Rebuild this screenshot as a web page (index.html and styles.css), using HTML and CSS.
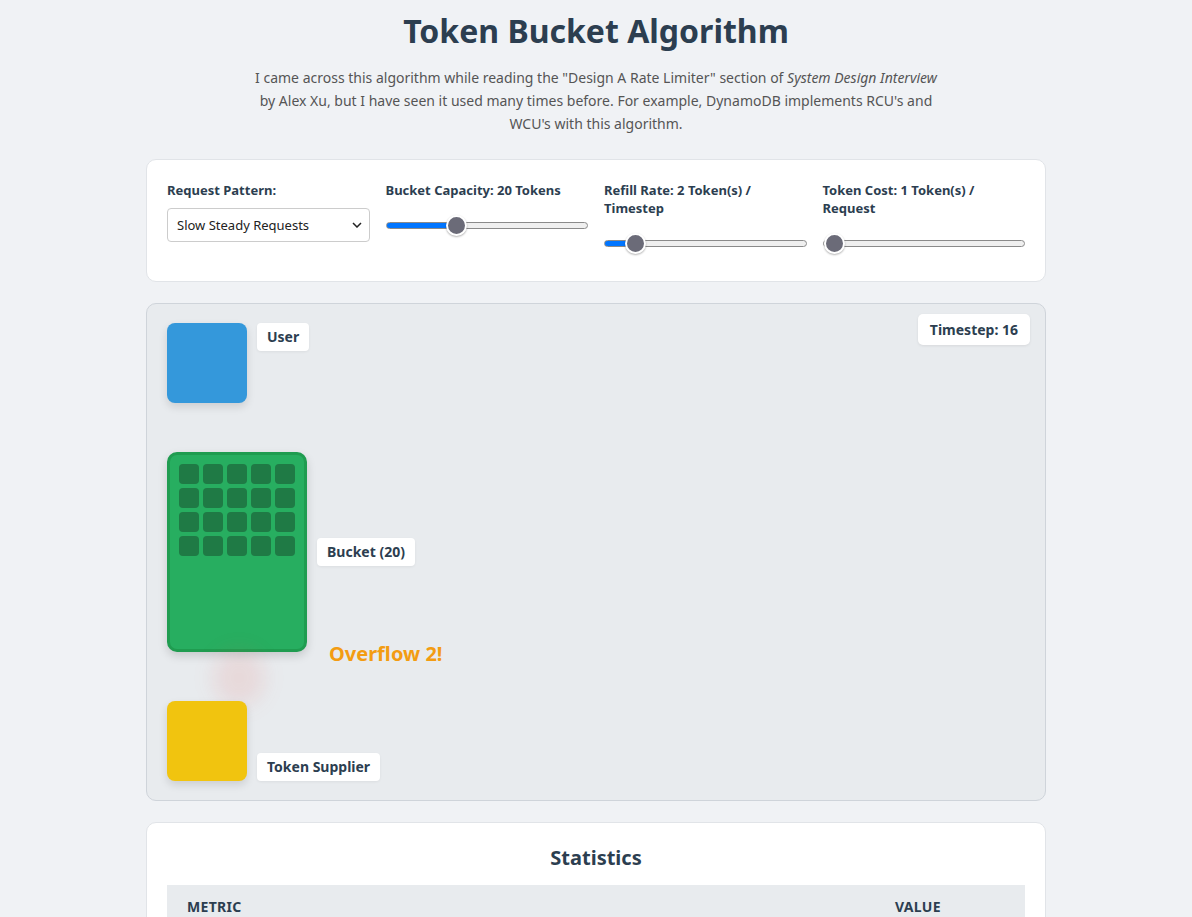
FILE: index.html
```html
<!DOCTYPE html>
<html>
<head>
<meta charset="utf-8">
<link rel="stylesheet" href="styles.css">
</head>
<body>
<div class="page">
  <h1 class="title">Token Bucket Algorithm</h1>
  <p class="intro">I came across this algorithm while reading the "Design A Rate Limiter" section of <em>System Design Interview</em> by Alex Xu, but I have seen it used many times before. For example, DynamoDB implements RCU's and WCU's with this algorithm.</p>

  <div class="card controls">
    <div class="control">
      <label class="ctl-label">Request Pattern:</label>
      <select class="select">
        <option>Slow Steady Requests</option>
      </select>
    </div>
    <div class="control">
      <label class="ctl-label">Bucket Capacity: 20 Tokens</label>
      <input class="range" type="range" min="5" max="50" value="20" style="--p:33.3%">
    </div>
    <div class="control">
      <label class="ctl-label">Refill Rate: 2 Token(s) / Timestep</label>
      <input class="range" type="range" min="1" max="10" value="2" style="--p:11.1%">
    </div>
    <div class="control">
      <label class="ctl-label">Token Cost: 1 Token(s) / Request</label>
      <input class="range" type="range" min="1" max="10" value="1" style="--p:0%">
    </div>
  </div>

  <div class="sim">
    <div class="timestep">Timestep: 16</div>
    <div class="row row-top">
      <div class="box user"></div>
      <div class="tag">User</div>
    </div>
    <div class="row row-mid">
      <div class="bucket">
        <div class="tokens">
          <span></span><span></span><span></span><span></span><span></span>
          <span></span><span></span><span></span><span></span><span></span>
          <span></span><span></span><span></span><span></span><span></span>
          <span></span><span></span><span></span><span></span><span></span>
        </div>
      </div>
      <div class="tag">Bucket (20)</div>
      <div class="overflow">Overflow 2!</div>
      <div class="drop"></div>
    </div>
    <div class="row row-bottom">
      <div class="box supplier"></div>
      <div class="tag">Token Supplier</div>
    </div>
  </div>

  <div class="card stats">
    <h2 class="stats-title">Statistics</h2>
    <table class="table">
      <thead>
        <tr><th>Metric</th><th class="val">Value</th></tr>
      </thead>
    </table>
  </div>
</div>
</body>
</html>
```

FILE: styles.css
```css
* { box-sizing: border-box; }
html, body { margin: 0; padding: 0; }
body {
  background: #f0f2f5;
  font-family: "Noto Sans", "Open Sans", sans-serif;
  color: #2c3e50;
}
.page {
  width: 900px;
  margin: 0 auto;
  padding-top: 8px;
}
.title {
  margin: 0;
  text-align: center;
  font-size: 32px;
  font-weight: 700;
  line-height: 46px;
  color: #2c3e50;
}
.intro {
  max-width: 700px;
  margin: 12px auto 24px;
  text-align: center;
  font-size: 14px;
  line-height: 23px;
  color: #555;
}
.card {
  background: #fff;
  border: 1px solid #e1e4e8;
  border-radius: 10px;
}
.controls {
  display: grid;
  grid-template-columns: repeat(4, 1fr);
  gap: 16px;
  padding: 20px 20px 34px;
  margin-bottom: 21px;
}
.control { display: flex; flex-direction: column; }
.ctl-label {
  font-size: 13px;
  font-weight: 700;
  line-height: 18px;
  margin-top: 1px;
  margin-bottom: 9px;
  color: #2c3e50;
}
.select {
  -webkit-appearance: none;
  appearance: none;
  height: 34px;
  border: 1px solid #ccc;
  border-radius: 4px;
  background: #fff url("data:image/svg+xml;utf8,<svg xmlns='http://www.w3.org/2000/svg' width='10' height='6' viewBox='0 0 10 6'><path d='M1 1l4 4 4-4' fill='none' stroke='%23222' stroke-width='1.5'/></svg>") no-repeat right 7px center;
  padding: 0 24px 0 9px;
  font-family: inherit;
  font-size: 13px;
  color: #222;
}
.range {
  -webkit-appearance: none;
  appearance: none;
  width: 100%;
  height: 7px;
  margin: 14px 0 0;
  border-radius: 4px;
  border: 1px solid #8a8a8a;
  background: linear-gradient(to right, #0075ff 0, #0075ff var(--p), #efefef var(--p), #efefef 100%);
}
.range::-webkit-slider-thumb {
  -webkit-appearance: none;
  width: 21px;
  height: 21px;
  border-radius: 50%;
  background: #6b6b78;
  border: 2px solid #fff;
  box-shadow: 0 1px 2px rgba(0,0,0,.3);
}
.sim {
  position: relative;
  height: 498px;
  background: #e8ebee;
  border: 1px solid #cfd4da;
  border-radius: 10px;
  padding: 19px 20px;
  display: flex;
  flex-direction: column;
  justify-content: space-between;
  margin-bottom: 21px;
}
.timestep {
  position: absolute;
  top: 10px;
  right: 15px;
  background: #fff;
  border-radius: 5px;
  padding: 0 12px;
  height: 31px;
  line-height: 31px;
  font-size: 14px;
  font-weight: 700;
  box-shadow: 0 1px 3px rgba(0,0,0,.08);
}
.row { display: flex; gap: 10px; position: relative; }
.row-top { align-items: flex-start; }
.row-mid { align-items: center; }
.row-bottom { align-items: flex-end; }
.box {
  width: 80px;
  height: 80px;
  border-radius: 8px;
  box-shadow: 0 4px 8px rgba(0,0,0,.12);
}
.user { background: #3498db; }
.supplier { background: #f1c40f; }
.tag {
  background: #fff;
  border-radius: 4px;
  padding: 0 10px;
  height: 28px;
  line-height: 28px;
  font-size: 14px;
  font-weight: 700;
  box-shadow: 0 1px 3px rgba(0,0,0,.06);
}
.bucket {
  width: 140px;
  height: 200px;
  background: #27ae60;
  border: 3px solid #1f9c50;
  border-radius: 10px;
  padding: 9px;
  box-shadow: 0 4px 10px rgba(0,0,0,.15);
}
.tokens {
  display: grid;
  grid-template-columns: repeat(5, 20px);
  grid-auto-rows: 20px;
  gap: 4px;
}
.tokens span {
  background: #1f7a45;
  border-radius: 4px;
}
.overflow {
  position: absolute;
  left: 162px;
  top: 188px;
  color: #f39c12;
  font-size: 20px;
  font-weight: 700;
}
.drop {
  position: absolute;
  left: 46px;
  top: 198px;
  width: 52px;
  height: 56px;
  border-radius: 50%;
  background: rgba(231, 76, 60, .11);
  filter: blur(10px);
}
.stats {
  padding: 20px;
  min-height: 200px;
}
.stats-title {
  margin: 0 0 12px;
  text-align: center;
  font-size: 20px;
  line-height: 30px;
  font-weight: 700;
}
.table {
  width: 100%;
  border-collapse: collapse;
}
.table th {
  background: #e8ebee;
  text-align: left;
  padding: 12px 20px;
  font-size: 14px;
  font-weight: 700;
  text-transform: uppercase;
  letter-spacing: .3px;
  color: #2c3e50;
}
.table th.val { width: 150px; }
```
